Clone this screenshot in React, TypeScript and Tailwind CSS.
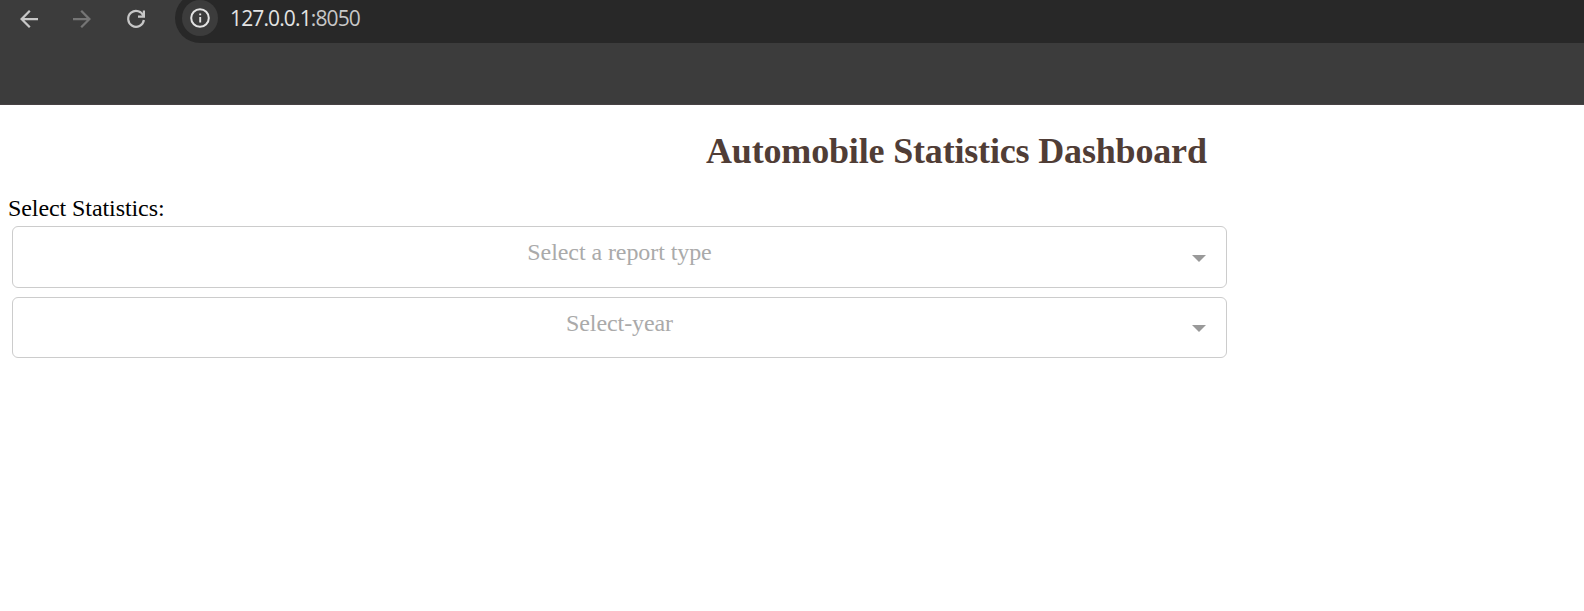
function BackIcon({ className }: { className: string }) {
  return (
    <svg viewBox="4 4 16 16" className={className} fill="currentColor">
      <path d="M20 11H7.83l5.59-5.59L12 4l-8 8 8 8 1.41-1.41L7.83 13H20v-2z" />
    </svg>
  );
}

function ReloadIcon() {
  return (
    <svg viewBox="0 0 18 18" className="ml-9 size-[18px] overflow-visible text-[#c7c7c7]" fill="none" stroke="currentColor" strokeWidth="2.2">
      <path d="M16.6 6.4A7.9 7.9 0 1 0 16.9 10" />
      <path d="M11 6.6h5.9V.4" />
    </svg>
  );
}

function InfoIcon() {
  return (
    <svg viewBox="0 0 20 20" className="size-5 text-[#e3e3e3]" fill="none" stroke="currentColor" strokeWidth="2">
      <circle cx="10" cy="10" r="8.8" />
      <path d="M10.2 9v5.5M10.2 5.5v1.8" strokeWidth="1.9" />
    </svg>
  );
}

function Select({ placeholder, className }: { placeholder: string; className: string }) {
  return (
    <div className={`flex w-[1215px] justify-between rounded-[6px] border border-[#ccc] ${className}`}>
      <span className="w-[54px]" />
      <span className="text-[24px] leading-[50px] tracking-[-0.08px] text-[#aaa]">{placeholder}</span>
      <span className="flex w-[54px] items-center justify-center pt-0.5">
        <svg viewBox="0 0 14 7" className="h-[7px] w-[14px] text-[#999]" fill="currentColor">
          <path d="M0 0h14L7 7z" />
        </svg>
      </span>
    </div>
  );
}

export default function App() {
  return (
    <div className="h-[611px] w-[1584px] overflow-hidden bg-white font-['Liberation_Serif',serif]">
      <header className="flex h-[105px] items-start border-b border-[#474244] bg-[#3c3c3c]">
        <nav className="flex h-[37px] items-center pl-5">
          <BackIcon className="size-[18px] text-[#c7c7c7]" />
          <BackIcon className="ml-[35px] size-[18px] rotate-180 text-[#757575]" />
          <ReloadIcon />
        </nav>
        <div className="-mt-[7px] ml-[30px] flex h-[50px] flex-1 items-center rounded-l-full bg-[#282828] pl-[7px]">
          <span className="flex size-9 items-center justify-center rounded-full bg-[#3c3c3c]">
            <InfoIcon />
          </span>
          <span className="ml-3 pt-0.5 font-['Open_Sans',sans-serif] text-[21px] tracking-[-0.87px] text-[#e3e3e3]">
            127.0.0.1<span className="text-[#c7c7c7]">:8050</span>
          </span>
        </div>
      </header>
      <main>
        <h1 className="ml-[706px] pt-6 text-[36px] leading-[44px] font-bold tracking-[-0.17px] whitespace-nowrap text-[#503d36]">
          Automobile Statistics Dashboard
        </h1>
        <p className="mt-[22px] ml-2 h-[31px] text-[24px] leading-[27px] tracking-[-0.08px] text-black">Select Statistics:</p>
        <div className="ml-3 flex flex-col gap-[9px]">
          <Select placeholder="Select a report type" className="h-[62px]" />
          <Select placeholder="Select-year" className="h-[61px]" />
        </div>
      </main>
    </div>
  );
}
